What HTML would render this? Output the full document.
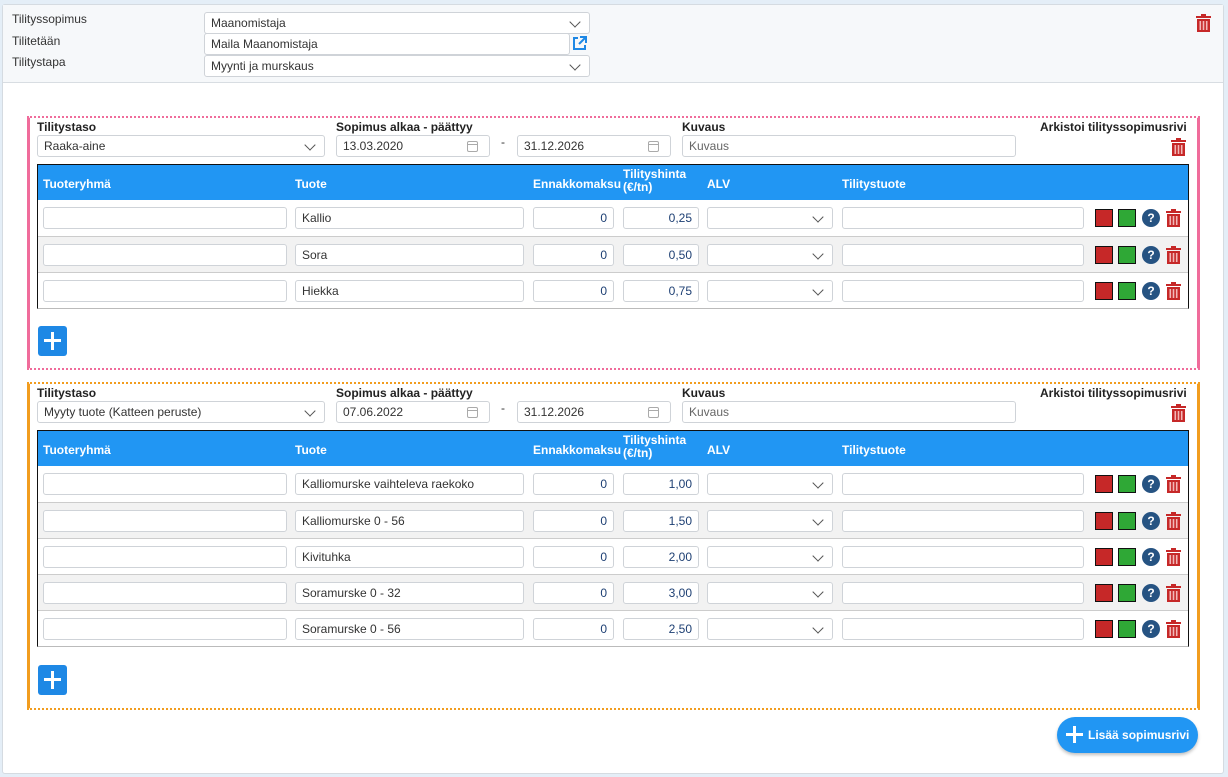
<!DOCTYPE html>
<html><head><meta charset="utf-8"><style>
*{box-sizing:border-box;margin:0;padding:0}
body{width:1228px;height:777px;background:#e4eef7;font-family:"Liberation Sans",Arial,sans-serif;font-size:12px;color:#333;position:relative;overflow:hidden}
.a{position:absolute}
.panel{position:absolute;left:2px;top:4px;width:1222px;height:770px;background:#fff;border:1px solid #d5dbe1;border-radius:3px}
.top{position:absolute;left:0;top:0;width:100%;height:78px;background:#f6f8fa;border-bottom:1px solid #d8dde2}
.inp{position:absolute;background:#fff;border:1px solid #cfd3d8;border-radius:3px;height:22px;line-height:20px;padding-left:6px;color:#333;white-space:nowrap;overflow:hidden}
.num{text-align:right;padding-right:6px;color:#1d3f73}
.chev{position:absolute;right:10px;top:5px;width:8px;height:8px;border-right:1.3px solid #555;border-bottom:1.3px solid #555;transform:rotate(45deg)}
.cal{position:absolute;right:11px;top:5px;width:11px;height:11px;border:1px solid #aaa;border-radius:2px}
.cal:before{content:"";position:absolute;left:0;right:0;top:2px;border-top:1px solid #aaa}
.lbl{position:absolute;font-weight:bold;color:#222;font-size:12px}
.blk{position:absolute;left:27px;width:1173px;border-left:3px solid;border-right:3px solid;border-top:2px dotted;border-bottom:2px dotted}
.tbl{position:absolute;left:7px;width:1152px;border:1px solid #111;border-bottom:1px solid #bbb}
.hd{height:35px;background:#2196f3;color:#fff;font-weight:bold;position:relative}
.hd span{position:absolute;top:12px}
.row{height:36px;position:relative;border-top:1px solid #ccc}
.row:nth-child(odd){background:#f2f2f2}
.row .inp{top:7px;height:22px}
.sq{position:absolute;top:9px;width:18px;height:18px;border:1px solid #111}
.q{position:absolute;top:9px;left:1104px;width:18px;height:18px;border-radius:50%;background:#265382;color:#fff;font-weight:bold;font-size:12px;text-align:center;line-height:18px}
.tr{position:absolute;width:15px;height:18px}
.plus{position:absolute;left:8px;width:29px;height:30px;background:#1e88e5;border-radius:3px}
.plus:before{content:"";position:absolute;left:13px;top:6px;width:3px;height:18px;background:#fff}
.plus:after{content:"";position:absolute;left:6px;top:13px;width:17px;height:3px;background:#fff}
</style></head><body>
<svg width="0" height="0" style="position:absolute"><defs><symbol id="t" viewBox="0 0 15 18"><rect x="5" y="0" width="5" height="2" fill="#c62828"/><rect x="0" y="2" width="15" height="2" fill="#c62828"/><rect x="1" y="5" width="13" height="13" fill="#c62828"/><rect x="3.5" y="7" width="1.6" height="9" fill="#f2b8b8"/><rect x="6.7" y="7" width="1.6" height="9" fill="#f2b8b8"/><rect x="9.9" y="7" width="1.6" height="9" fill="#f2b8b8"/></symbol></defs></svg>
<div class="panel">
<div class="top">
<div class="a" style="left:9px;top:7px">Tilityssopimus</div>
<div class="a" style="left:9px;top:29px">Tilitetään</div>
<div class="a" style="left:9px;top:50px">Tilitystapa</div>
<div class="inp" style="left:201px;top:7px;width:386px">Maanomistaja<i class="chev"></i></div>
<div class="inp" style="left:201px;top:28px;width:366px">Maila Maanomistaja</div>
<svg class="a" style="left:569px;top:31px" width="15" height="15" viewBox="0 0 15 15"><path d="M6 2H2v11h11V9" fill="none" stroke="#1e88e5" stroke-width="2"/><path d="M8 1h6v6M14 1L7 8" fill="none" stroke="#1e88e5" stroke-width="2"/></svg>
<div class="inp" style="left:201px;top:50px;width:386px">Myynti ja murskaus<i class="chev"></i></div>
<svg class="tr" style="left:1193px;top:9px"><use href="#t"/></svg>
</div>
</div>

<!-- block 1 -->
<div class="blk" style="top:116px;height:254px;border-color:#f06c9b">
<div class="lbl" style="left:7px;top:2px">Tilitystaso</div>
<div class="lbl" style="left:306px;top:2px">Sopimus alkaa - päättyy</div>
<div class="lbl" style="left:652px;top:2px">Kuvaus</div>
<div class="lbl" style="left:1010px;top:2px">Arkistoi tilityssopimusrivi</div>
<div class="inp" style="left:7px;top:17px;width:288px">Raaka-aine<i class="chev"></i></div>
<div class="inp" style="left:306px;top:17px;width:154px">13.03.2020<i class="cal"></i></div>
<div class="a" style="left:471px;top:17px">-</div>
<div class="inp" style="left:487px;top:17px;width:154px">31.12.2026<i class="cal"></i></div>
<div class="inp" style="left:652px;top:17px;width:334px;color:#666">Kuvaus</div>
<svg class="tr" style="left:1141px;top:20px"><use href="#t"/></svg>
<div class="tbl" style="top:46px">
<div class="hd"><span style="left:5px">Tuoteryhmä</span><span style="left:257px">Tuote</span><span style="left:495px">Ennakkomaksu</span><span style="left:585px;top:3px;line-height:13px">Tilityshinta<br>(€/tn)</span><span style="left:669px">ALV</span><span style="left:804px">Tilitystuote</span></div>
<div class="row" style="border-top:0"><div class="inp" style="left:5px;width:244px"></div><div class="inp" style="left:257px;width:229px">Kallio</div><div class="inp num" style="left:495px;width:81px">0</div><div class="inp num" style="left:585px;width:76px">0,25</div><div class="inp" style="left:669px;width:126px"><i class="chev"></i></div><div class="inp" style="left:804px;width:242px"></div><div class="sq" style="left:1057px;background:#c62828"></div><div class="sq" style="left:1080px;background:#2fa836"></div><div class="q">?</div><svg class="tr" style="left:1128px;top:9px"><use href="#t"/></svg></div>
<div class="row"><div class="inp" style="left:5px;width:244px"></div><div class="inp" style="left:257px;width:229px">Sora</div><div class="inp num" style="left:495px;width:81px">0</div><div class="inp num" style="left:585px;width:76px">0,50</div><div class="inp" style="left:669px;width:126px"><i class="chev"></i></div><div class="inp" style="left:804px;width:242px"></div><div class="sq" style="left:1057px;background:#c62828"></div><div class="sq" style="left:1080px;background:#2fa836"></div><div class="q">?</div><svg class="tr" style="left:1128px;top:9px"><use href="#t"/></svg></div>
<div class="row" style="background:#fff"><div class="inp" style="left:5px;width:244px"></div><div class="inp" style="left:257px;width:229px">Hiekka</div><div class="inp num" style="left:495px;width:81px">0</div><div class="inp num" style="left:585px;width:76px">0,75</div><div class="inp" style="left:669px;width:126px"><i class="chev"></i></div><div class="inp" style="left:804px;width:242px"></div><div class="sq" style="left:1057px;background:#c62828"></div><div class="sq" style="left:1080px;background:#2fa836"></div><div class="q">?</div><svg class="tr" style="left:1128px;top:9px"><use href="#t"/></svg></div>
</div>
<div class="plus" style="top:208px"></div>
</div>

<!-- block 2 -->
<div class="blk" style="top:382px;height:328px;border-color:#f29d1f">
<div class="lbl" style="left:7px;top:2px">Tilitystaso</div>
<div class="lbl" style="left:306px;top:2px">Sopimus alkaa - päättyy</div>
<div class="lbl" style="left:652px;top:2px">Kuvaus</div>
<div class="lbl" style="left:1010px;top:2px">Arkistoi tilityssopimusrivi</div>
<div class="inp" style="left:7px;top:17px;width:288px">Myyty tuote (Katteen peruste)<i class="chev"></i></div>
<div class="inp" style="left:306px;top:17px;width:154px">07.06.2022<i class="cal"></i></div>
<div class="a" style="left:471px;top:17px">-</div>
<div class="inp" style="left:487px;top:17px;width:154px">31.12.2026<i class="cal"></i></div>
<div class="inp" style="left:652px;top:17px;width:334px;color:#666">Kuvaus</div>
<svg class="tr" style="left:1141px;top:20px"><use href="#t"/></svg>
<div class="tbl" style="top:46px">
<div class="hd"><span style="left:5px">Tuoteryhmä</span><span style="left:257px">Tuote</span><span style="left:495px">Ennakkomaksu</span><span style="left:585px;top:3px;line-height:13px">Tilityshinta<br>(€/tn)</span><span style="left:669px">ALV</span><span style="left:804px">Tilitystuote</span></div>
<div class="row" style="border-top:0"><div class="inp" style="left:5px;width:244px"></div><div class="inp" style="left:257px;width:229px">Kalliomurske vaihteleva raekoko</div><div class="inp num" style="left:495px;width:81px">0</div><div class="inp num" style="left:585px;width:76px">1,00</div><div class="inp" style="left:669px;width:126px"><i class="chev"></i></div><div class="inp" style="left:804px;width:242px"></div><div class="sq" style="left:1057px;background:#c62828"></div><div class="sq" style="left:1080px;background:#2fa836"></div><div class="q">?</div><svg class="tr" style="left:1128px;top:9px"><use href="#t"/></svg></div>
<div class="row"><div class="inp" style="left:5px;width:244px"></div><div class="inp" style="left:257px;width:229px">Kalliomurske 0 - 56</div><div class="inp num" style="left:495px;width:81px">0</div><div class="inp num" style="left:585px;width:76px">1,50</div><div class="inp" style="left:669px;width:126px"><i class="chev"></i></div><div class="inp" style="left:804px;width:242px"></div><div class="sq" style="left:1057px;background:#c62828"></div><div class="sq" style="left:1080px;background:#2fa836"></div><div class="q">?</div><svg class="tr" style="left:1128px;top:9px"><use href="#t"/></svg></div>
<div class="row"><div class="inp" style="left:5px;width:244px"></div><div class="inp" style="left:257px;width:229px">Kivituhka</div><div class="inp num" style="left:495px;width:81px">0</div><div class="inp num" style="left:585px;width:76px">2,00</div><div class="inp" style="left:669px;width:126px"><i class="chev"></i></div><div class="inp" style="left:804px;width:242px"></div><div class="sq" style="left:1057px;background:#c62828"></div><div class="sq" style="left:1080px;background:#2fa836"></div><div class="q">?</div><svg class="tr" style="left:1128px;top:9px"><use href="#t"/></svg></div>
<div class="row"><div class="inp" style="left:5px;width:244px"></div><div class="inp" style="left:257px;width:229px">Soramurske 0 - 32</div><div class="inp num" style="left:495px;width:81px">0</div><div class="inp num" style="left:585px;width:76px">3,00</div><div class="inp" style="left:669px;width:126px"><i class="chev"></i></div><div class="inp" style="left:804px;width:242px"></div><div class="sq" style="left:1057px;background:#c62828"></div><div class="sq" style="left:1080px;background:#2fa836"></div><div class="q">?</div><svg class="tr" style="left:1128px;top:9px"><use href="#t"/></svg></div>
<div class="row"><div class="inp" style="left:5px;width:244px"></div><div class="inp" style="left:257px;width:229px">Soramurske 0 - 56</div><div class="inp num" style="left:495px;width:81px">0</div><div class="inp num" style="left:585px;width:76px">2,50</div><div class="inp" style="left:669px;width:126px"><i class="chev"></i></div><div class="inp" style="left:804px;width:242px"></div><div class="sq" style="left:1057px;background:#c62828"></div><div class="sq" style="left:1080px;background:#2fa836"></div><div class="q">?</div><svg class="tr" style="left:1128px;top:9px"><use href="#t"/></svg></div>
</div>
<div class="plus" style="top:281px"></div>
</div>

<div class="a" style="left:1057px;top:717px;width:141px;height:36px;border-radius:18px;background:#2196f3;box-shadow:0 2px 3px rgba(0,0,0,.25);color:#fff;font-weight:bold;font-size:12px;line-height:36px;padding-left:31px">Lisää sopimusrivi
<span class="a" style="left:9px;top:9px;width:17px;height:17px"><span class="a" style="left:7px;top:0;width:3px;height:17px;background:#fff"></span><span class="a" style="left:0;top:7px;width:17px;height:3px;background:#fff"></span></span></div>
</body></html>
